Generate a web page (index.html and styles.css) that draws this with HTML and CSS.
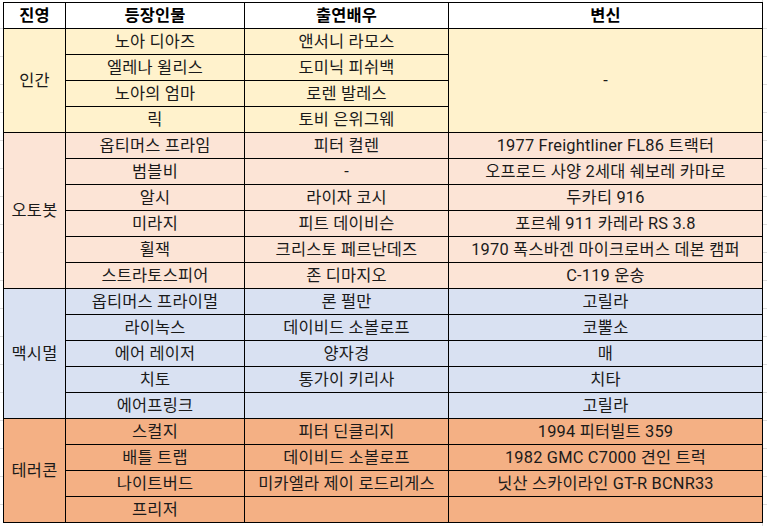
FILE: index.html
```html
<!DOCTYPE html>
<html lang="ko">
<head>
<meta charset="utf-8">
<link rel="stylesheet" href="styles.css">
</head>
<body>
<table class="cast">
  <colgroup>
    <col class="c1"><col class="c2"><col class="c3"><col class="c4">
  </colgroup>
  <thead>
    <tr class="head"><th>진영</th><th>등장인물</th><th>출연배우</th><th>변신</th></tr>
  </thead>
  <tbody class="human">
    <tr><td rowspan="4">인간</td><td>노아 디아즈</td><td>앤서니 라모스</td><td rowspan="4">-</td></tr>
    <tr><td>엘레나 윌리스</td><td>도미닉 피쉬백</td></tr>
    <tr><td>노아의 엄마</td><td>로렌 발레스</td></tr>
    <tr><td>릭</td><td>토비 은위그웨</td></tr>
  </tbody>
  <tbody class="autobot">
    <tr><td rowspan="6">오토봇</td><td>옵티머스 프라임</td><td>피터 컬렌</td><td>1977 Freightliner FL86 트랙터</td></tr>
    <tr><td>범블비</td><td>-</td><td>오프로드 사양 2세대 쉐보레 카마로</td></tr>
    <tr><td>알시</td><td>라이자 코시</td><td>두카티 916</td></tr>
    <tr><td>미라지</td><td>피트 데이비슨</td><td>포르쉐 911 카레라 RS 3.8</td></tr>
    <tr><td>휠잭</td><td>크리스토 페르난데즈</td><td>1970 폭스바겐 마이크로버스 데본 캠퍼</td></tr>
    <tr><td>스트라토스피어</td><td>존 디마지오</td><td>C-119 운송</td></tr>
  </tbody>
  <tbody class="maximal">
    <tr><td rowspan="5">맥시멀</td><td>옵티머스 프라이멀</td><td>론 펄만</td><td>고릴라</td></tr>
    <tr><td>라이녹스</td><td>데이비드 소볼로프</td><td>코뿔소</td></tr>
    <tr><td>에어 레이저</td><td>양자경</td><td>매</td></tr>
    <tr><td>치토</td><td>통가이 키리사</td><td>치타</td></tr>
    <tr><td>에어프링크</td><td></td><td>고릴라</td></tr>
  </tbody>
  <tbody class="terrorcon">
    <tr><td rowspan="4">테러콘</td><td>스컬지</td><td>피터 딘클리지</td><td>1994 피터빌트 359</td></tr>
    <tr><td>배틀 트랩</td><td>데이비드 소볼로프</td><td>1982 GMC C7000 견인 트럭</td></tr>
    <tr><td>나이트버드</td><td>미카엘라 제이 로드리게스</td><td>닛산 스카이라인 GT-R BCNR33</td></tr>
    <tr><td>프리저</td><td></td><td></td></tr>
  </tbody>
</table>
</body>
</html>
```

FILE: styles.css
```css
html {
  background-color: #ffffff;
  background-image:
    linear-gradient(to right, transparent 762px, #d8d8d8 762px, #d8d8d8 763px, transparent 763px),
    repeating-linear-gradient(to bottom, transparent 0, transparent 27px, #dcdcdc 27px, #dcdcdc 28px);
  background-position: 0 1px, 0 1px;
  min-height: 100%;
}

body {
  margin: 2px 0 0 3px;
  font-family: Roboto, "Noto Sans CJK KR", sans-serif;
  font-size: 16.4px;
  color: #1a1a1a;
}

.cast {
  border-collapse: collapse;
  table-layout: fixed;
  width: 759px;
}

.c1 { width: 62px; }
.c2 { width: 179px; }
.c3 { width: 204px; }
.c4 { width: 314px; }

.cast th,
.cast td {
  border: 1px solid #000;
  height: 25px;
  padding: 0;
  text-align: center;
  vertical-align: middle;
  line-height: 25px;
  white-space: nowrap;
  overflow: hidden;
  letter-spacing: 0.2px;
}

.cast th {
  font-weight: bold;
  background: #ffffff;
  color: #000;
}

.human td { background: #fff2cc; }
.autobot td { background: #fce4d6; }
.maximal td { background: #d9e1f2; }
.terrorcon td { background: #f4b084; }
```
